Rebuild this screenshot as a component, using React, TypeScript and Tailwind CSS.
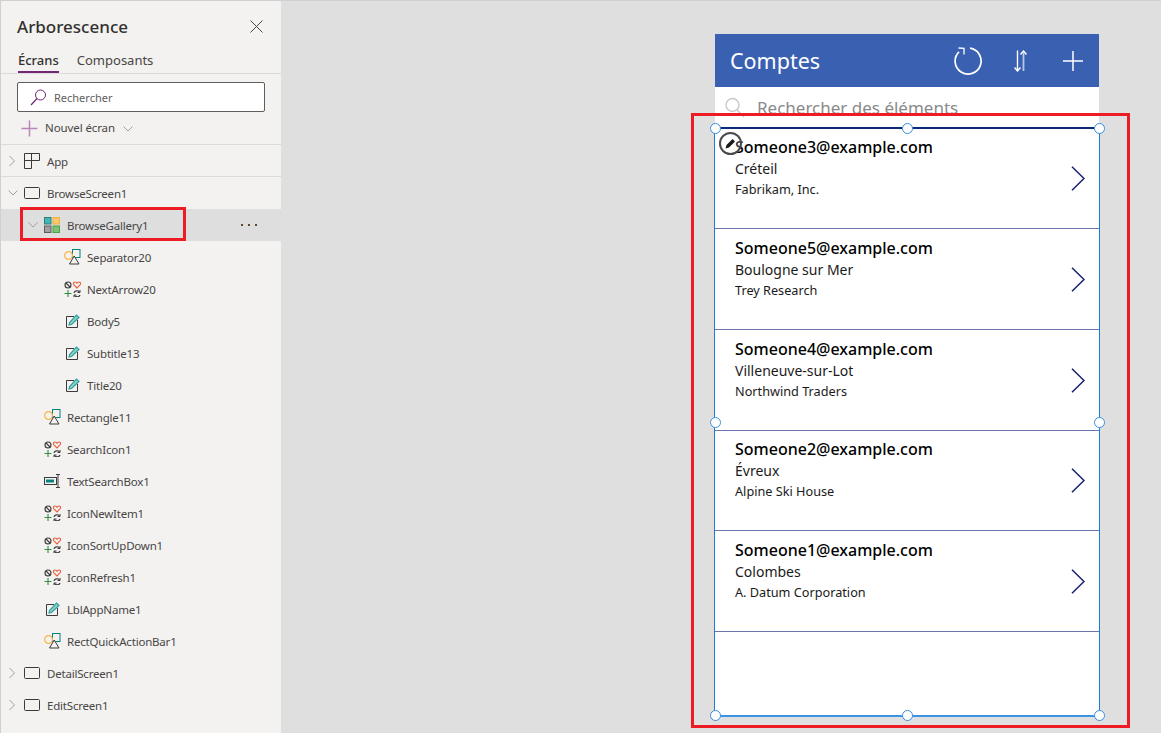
import React from "react";

const FONT = { fontFamily: '"Noto Sans", "Open Sans", sans-serif' };

function Chevron({ open }: { open: boolean }) {
  return (
    <svg width="12" height="12" viewBox="0 0 12 12" fill="none" stroke="#a19f9d" strokeWidth="1">
      {open ? <path d="M0.5 3.5 L5 8 L9.5 3.5" /> : <path d="M1.5 1 L6.5 6 L1.5 11" />}
    </svg>
  );
}

function ScreenIcon() {
  return (
    <svg width="16" height="12" viewBox="0 0 16 12" fill="none">
      <rect x="0.5" y="0.5" width="15" height="11" rx="1" stroke="#3b3a39" />
    </svg>
  );
}

function AppIcon() {
  return (
    <svg width="16" height="16" viewBox="0 0 16 16" fill="none" stroke="#3b3a39">
      <path d="M0.5 0.5H15.5V7.5H7.5V15.5H0.5Z M7.5 0.5V7.5H0.5" />
    </svg>
  );
}

function GalleryIcon() {
  return (
    <svg width="16" height="16" viewBox="0 0 16 16">
      <rect x="0.5" y="0.5" width="6.5" height="6.5" fill="#3fb8b8" stroke="#38787a" />
      <rect x="9" y="0.5" width="6.5" height="6.5" fill="#fdc76c" stroke="#f0b046" />
      <rect x="0.5" y="9" width="6.5" height="6.5" fill="#a19f9d" stroke="#605e5c" />
      <rect x="9" y="9" width="6.5" height="6.5" fill="#7cc474" stroke="#4f9e48" />
    </svg>
  );
}

function ShapesIcon() {
  return (
    <svg width="17" height="16" viewBox="0 0 17 16" fill="none" className="-mt-[1px]">
      <rect x="8.5" y="0.5" width="7.5" height="8" fill="#f3f2f1" stroke="#00827f" />
      <circle cx="4.5" cy="6.5" r="3.9" fill="#f3f2f1" stroke="#f7b84b" strokeWidth="1.2" />
      <path d="M15 15H5.5L10.2 7Z" fill="#f3f2f1" stroke="#3b3a39" />
    </svg>
  );
}

function MultiIcon() {
  return (
    <svg width="17" height="16" viewBox="0 0 17 16" fill="none">
      <circle cx="4" cy="4" r="3" stroke="#3b3a39" strokeWidth="1.1" />
      <path d="M2 2 L6 6" stroke="#3b3a39" strokeWidth="1.1" />
      <path d="M13 7 L9.8 3.6 C8.6 2 10.4 0.3 12 1.4 L13 2.2 L14 1.4 C15.6 0.3 17.4 2 16.2 3.6 Z" stroke="#e8603c" strokeWidth="1.1" />
      <path d="M4 9V16 M0.5 12.5H7.5" stroke="#2f8f3e" strokeWidth="1.1" />
      <path d="M10 12 C10.5 9.5 14 9 15.5 11 M16 14 C15.5 16 12 16.5 10.5 14.5" stroke="#3b3a39" strokeWidth="1.2" />
      <path d="M16 9V11.5H13.5 M10 16.5V14H12.5" stroke="#3b3a39" strokeWidth="1" />
    </svg>
  );
}

function LabelIcon() {
  return (
    <svg width="14" height="14" viewBox="0 0 14 14" fill="none">
      <path d="M8 2.5H0.5V13.5H11.5V6" stroke="#3b3a39" />
      <path d="M3 11 L3.5 8.5 L10.5 1 L13 3.5 L5.5 10.5 Z" fill="#8fcfcb" stroke="#2a9d99" strokeWidth="1.1" />
    </svg>
  );
}

function TextInputIcon() {
  return (
    <svg width="17" height="14" viewBox="0 0 17 14" fill="none">
      <rect x="0.5" y="3.5" width="12" height="7" fill="#f3f2f1" stroke="#3b3a39" />
      <rect x="2" y="5.5" width="8" height="3" fill="#00827f" />
      <path d="M12 0.5H16 M14 0.5V13.5 M12 13.5H16" stroke="#3b3a39" />
    </svg>
  );
}

type Row = { label: string; icon: React.ReactNode; indent: string };

const rows: Row[] = [
  { label: "Separator20", icon: <ShapesIcon />, indent: "pl-[63px]" },
  { label: "NextArrow20", icon: <MultiIcon />, indent: "pl-[63px]" },
  { label: "Body5", icon: <LabelIcon />, indent: "pl-[65px]" },
  { label: "Subtitle13", icon: <LabelIcon />, indent: "pl-[65px]" },
  { label: "Title20", icon: <LabelIcon />, indent: "pl-[65px]" },
  { label: "Rectangle11", icon: <ShapesIcon />, indent: "pl-[43px]" },
  { label: "SearchIcon1", icon: <MultiIcon />, indent: "pl-[43px]" },
  { label: "TextSearchBox1", icon: <TextInputIcon />, indent: "pl-[43px]" },
  { label: "IconNewItem1", icon: <MultiIcon />, indent: "pl-[43px]" },
  { label: "IconSortUpDown1", icon: <MultiIcon />, indent: "pl-[43px]" },
  { label: "IconRefresh1", icon: <MultiIcon />, indent: "pl-[43px]" },
  { label: "LblAppName1", icon: <LabelIcon />, indent: "pl-[45px]" },
  { label: "RectQuickActionBar1", icon: <ShapesIcon />, indent: "pl-[43px]" },
];

function TreeItem({ r }: { r: Row }) {
  const iconBox = r.indent === "pl-[65px]" || r.indent === "pl-[45px]" ? "w-[21px]" : "w-[23px]";
  return (
    <div className={`flex h-8 items-center ${r.indent} text-[11.5px] tracking-[-0.2px] text-[#484644]`}>
      <span className={`flex ${iconBox} shrink-0 items-center`}>{r.icon}</span>
      <span className="pt-[2px]">{r.label}</span>
    </div>
  );
}

function RootItem({ label, open, icon, border }: { label: string; open: boolean; icon: React.ReactNode; border?: boolean }) {
  return (
    <div className={`flex h-8 items-center pl-[7px] text-[11.5px] tracking-[-0.2px] text-[#484644] ${border ? "border-b border-[#dcdbda]" : ""}`}>
      <span className="flex w-[16px] shrink-0"><Chevron open={open} /></span>
      <span className="flex w-[23px] shrink-0 items-center">{icon}</span>
      <span className="pt-[2px]">{label}</span>
    </div>
  );
}

function Handle({ className }: { className: string }) {
  return <span className={`absolute h-[11px] w-[11px] rounded-full border-[1.5px] border-[#3a8ee0] bg-white ${className}`} />;
}

const accounts = [
  { a: "Someone3@example.com", b: "Créteil", c: "Fabrikam, Inc.", row: "h-[100px]", pad: "pt-[6px]" },
  { a: "Someone5@example.com", b: "Boulogne sur Mer", c: "Trey Research", row: "h-[101px]", pad: "pt-[7px]" },
  { a: "Someone4@example.com", b: "Villeneuve-sur-Lot", c: "Northwind Traders", row: "h-[101px]", pad: "pt-[7px]" },
  { a: "Someone2@example.com", b: "Évreux", c: "Alpine Ski House", row: "h-[100px]", pad: "pt-[6px]" },
  { a: "Someone1@example.com", b: "Colombes", c: "A. Datum Corporation", row: "h-[101px]", pad: "pt-[7px]" },
];

export default function App() {
  return (
    <div style={FONT} className="relative flex h-[733px] w-[1161px] overflow-hidden border-l border-t border-[#d0d0d0] bg-[#dfdfdf]">
      {/* Sidebar */}
      <aside className="relative flex w-[280px] shrink-0 flex-col bg-[#f3f2f1]">
        <div className="flex h-[38px] items-center justify-between pl-4 pr-[18px] pt-[13px]">
          <span className="text-[17px] font-medium text-[#323130]">Arborescence</span>
          <svg width="13" height="13" viewBox="0 0 13 13" stroke="#484644" strokeWidth="1"><path d="M0.5 0.5L12.5 12.5M12.5 0.5L0.5 12.5" /></svg>
        </div>
        <div className="flex h-[35px] items-end gap-[18px] border-b border-[#dcdbda] pl-[17px] text-[13px] text-[#484644]">
          <span className="border-b-2 border-[#742774] font-medium leading-[22px] text-[#323130]">Écrans</span>
          <span className="pb-[2px] leading-[22px]">Composants</span>
        </div>
        <div className="px-4 pt-2">
          <div className="flex h-[30px] w-[248px] items-center rounded-[2px] border border-[#605e5c] bg-white pl-3 text-[11px] text-[#605e5c]">
            <svg width="17" height="17" viewBox="0 0 17 17" fill="none" className="mr-[7px]">
              <circle cx="10.5" cy="6" r="5" stroke="#742774" />
              <path d="M7 9.5L1 16" stroke="#742774" strokeWidth="1.2" />
            </svg>
            <span className="pt-[2px]">Rechercher</span>
          </div>
        </div>
        <div className="flex h-[33px] items-center border-b border-[#dcdbda] pl-[20px] text-[11.5px] tracking-[-0.1px] text-[#484644]">
          <svg width="17" height="17" viewBox="0 0 17 17" stroke="#b887b8" strokeWidth="1.5" className="mr-[7px]"><path d="M8.5 0.5V16.5M0.5 8.5H16.5" /></svg>
          <span>Nouvel écran</span>
          <span className="ml-2 flex pt-[2px]"><Chevron open /></span>
        </div>
        <RootItem label="App" open={false} icon={<AppIcon />} border />
        <RootItem label="BrowseScreen1" open icon={<ScreenIcon />} />
        <div className="flex h-8 items-center justify-between bg-[#dedede] pl-[27px] pr-[24px] text-[11.5px] tracking-[-0.2px] text-[#484644]">
          <span className="flex items-center">
            <span className="flex w-[16px] shrink-0"><Chevron open /></span>
            <span className="flex w-[23px] shrink-0"><GalleryIcon /></span>
            <span className="pt-[2px]">BrowseGallery1</span>
          </span>
          <span className="flex gap-[5px]">
            <i className="h-[2px] w-[2px] bg-[#5c4a2a]" />
            <i className="h-[2px] w-[2px] bg-[#5c4a2a]" />
            <i className="h-[2px] w-[2px] bg-[#5c4a2a]" />
          </span>
        </div>
        {rows.map((r) => <TreeItem key={r.label} r={r} />)}
        <RootItem label="DetailScreen1" open={false} icon={<ScreenIcon />} />
        <RootItem label="EditScreen1" open={false} icon={<ScreenIcon />} />
        <span className="absolute left-[19px] top-[206px] h-[34px] w-[166px] border-[3px] border-[#ed1c24]" />
      </aside>

      {/* Canvas */}
      <main className="flex-1 pl-[434px] pt-[33px]">
        <div className="w-[384px]">
          <div className="flex h-[53px] items-center bg-[#3a60b1] pl-[15px] text-white">
            <span className="pt-[2px] text-[21.5px]">Comptes</span>
            <svg width="30" height="30" viewBox="0 0 30 30" fill="none" stroke="white" strokeWidth="1.7" className="ml-auto -translate-x-[1px]">
              <path d="M17 2.2 A13 13 0 1 1 6 5.8" />
              <path d="M5.5 2 L11 2.4 L11 8.5" strokeWidth="1.3" />
            </svg>
            <svg width="13" height="22" viewBox="0 0 13 22" fill="none" stroke="white" strokeWidth="1.4" className="ml-[30px]">
              <path d="M3.5 0.5V21M0.5 17.5L3.5 21L6.5 17.5" />
              <path d="M9.5 21V1" strokeOpacity="0.65" strokeWidth="1.8" />
              <path d="M6.5 4.5L9.5 1L12.5 4.5" />
            </svg>
            <svg width="20" height="20" viewBox="0 0 20 20" stroke="white" strokeWidth="1.5" className="ml-[36px] mr-[16px]"><path d="M10 0V20M0 10H20" /></svg>
          </div>
          <div className="flex h-10 items-start overflow-hidden bg-white pl-[9px] pt-[9px] text-[17px] leading-[23px] text-[#8a8a8a]">
            <svg width="22" height="22" viewBox="0 0 22 22" fill="none" stroke="#c8c8c8" strokeWidth="1.4" className="mr-[11px] mt-[1px] shrink-0">
              <circle cx="8.5" cy="8" r="6.5" />
              <path d="M13 13L20 20" />
            </svg>
            Rechercher des éléments
          </div>
          <div className="relative -ml-[1px] h-[590px] w-[386px] border border-b-2 border-t-2 border-[#1e7bd0] border-b-[#3c92e4] border-t-[#0b2a7a] bg-white">
            {accounts.map((x) => (
              <div key={x.a} className={`flex ${x.row} items-center justify-between border-b border-[#6a74ad] pl-[20px] pr-[14px]`}>
                <div className={`flex h-full flex-col ${x.pad} text-[#1b1a19]`}>
                  <span className="text-[16px] font-medium leading-[24px] text-black">{x.a}</span>
                  <span className="text-[14px] leading-[20px]">{x.b}</span>
                  <span className="text-[12.7px] leading-[20px]">{x.c}</span>
                </div>
                <svg width="14" height="25" viewBox="0 0 14 25" fill="none" stroke="#14206e" strokeWidth="1.5">
                  <path d="M1 0.8L13 12.5L1 24.2" />
                </svg>
              </div>
            ))}
            <span className="absolute left-[4px] top-[3px] flex h-[23px] w-[23px] items-center justify-center rounded-full border-2 border-[#4a4a4a] bg-white/20">
              <svg width="13" height="13" viewBox="0 0 13 13"><path d="M1.5 11.5L2.5 8L8.5 2L11 4.5L5 10.5Z" fill="#1b1a19" /></svg>
            </span>
            <Handle className="-left-[5px] -top-[6px]" />
            <Handle className="left-[187px] -top-[6px]" />
            <Handle className="-right-[6px] -top-[6px]" />
            <Handle className="-left-[5px] top-[288px]" />
            <Handle className="-right-[6px] top-[288px]" />
            <Handle className="-left-[5px] -bottom-[6px]" />
            <Handle className="left-[187px] -bottom-[6px]" />
            <Handle className="-right-[6px] -bottom-[6px]" />
          </div>
        </div>
      </main>
      <span className="absolute left-[690px] top-[112px] h-[615px] w-[439px] border-[3px] border-[#ed1c24]" />
    </div>
  );
}
